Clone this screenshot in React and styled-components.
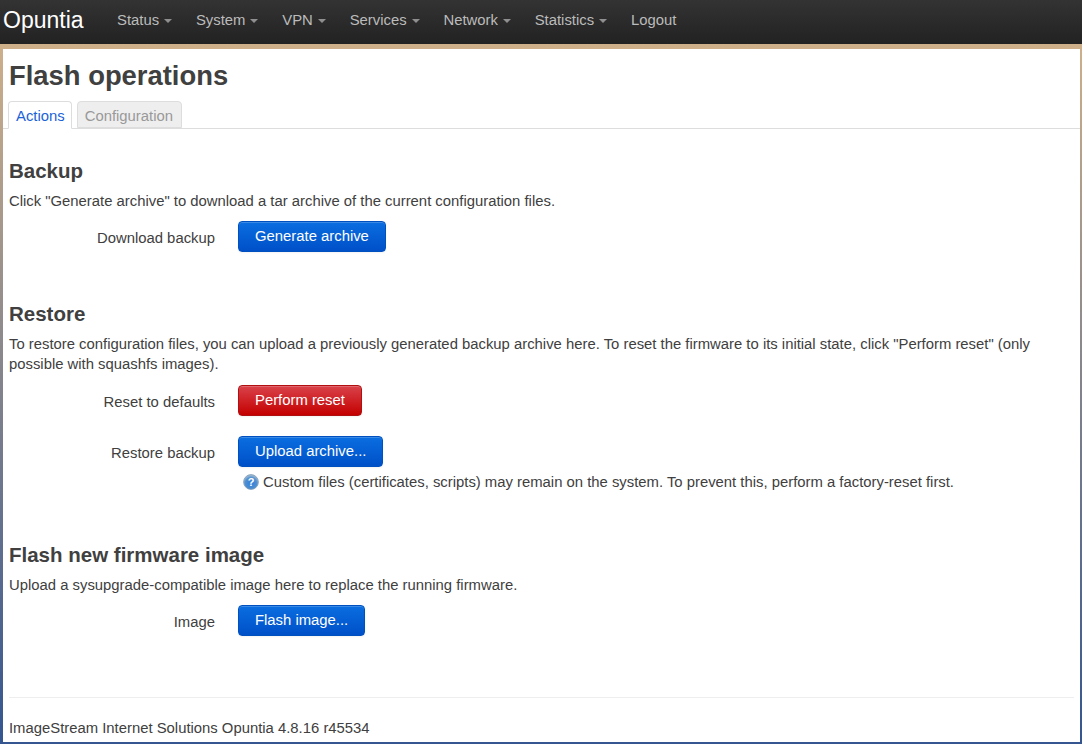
import React from "react";
import styled, { createGlobalStyle } from "styled-components";

const GlobalStyle = createGlobalStyle`
  html, body {
    margin: 0;
    padding: 0;
    height: 744px;
    overflow: hidden;
  }
  body {
    font-family: "Liberation Sans", Arial, sans-serif;
    font-size: 14.85px;
    line-height: 20px;
    color: #404040;
  }
`;

const menus = ["Status", "System", "VPN", "Services", "Network", "Statistics"];

const HelpIcon = () => (
  <svg width="16" height="16" viewBox="0 0 16 16">
    <defs>
      <radialGradient id="helpFill" cx="0.5" cy="0.6" r="0.55">
        <stop offset="0" stopColor="#2f7fdc" />
        <stop offset="0.7" stopColor="#4f8fd0" />
        <stop offset="1" stopColor="#9db8d2" />
      </radialGradient>
    </defs>
    <circle cx="8" cy="8" r="7.4" fill="url(#helpFill)" stroke="#7d9ab8" strokeWidth="0.8" />
    <text
      x="8"
      y="12"
      textAnchor="middle"
      fontSize="11"
      fontWeight="bold"
      fontFamily="Liberation Sans, sans-serif"
      fill="#fff"
    >
      ?
    </text>
  </svg>
);

const App = () => {
  return (
    <Page>
      <GlobalStyle />
      <Navbar>
        <Brand>Opuntia</Brand>
        <Menu>
          {menus.map((name) => (
            <MenuItem key={name}>
              {name}
              <Caret />
            </MenuItem>
          ))}
          <MenuItem>Logout</MenuItem>
        </Menu>
      </Navbar>
      <Main>
        <Title>Flash operations</Title>
        <Tabs>
          <Tab $active>Actions</Tab>
          <Tab>Configuration</Tab>
        </Tabs>
        <Section>
          <SectionTitle>Backup</SectionTitle>
          <Description>
            Click "Generate archive" to download a tar archive of the current
            configuration files.
          </Description>
          <FieldRow>
            <FieldLabel>Download backup</FieldLabel>
            <Button>Generate archive</Button>
          </FieldRow>
        </Section>
        <Section $top={48}>
          <SectionTitle>Restore</SectionTitle>
          <Description>
            To restore configuration files, you can upload a previously
            generated backup archive here. To reset the firmware to its initial
            state, click "Perform reset" (only possible with squashfs images).
          </Description>
          <FieldRow $top={11}>
            <FieldLabel>Reset to defaults</FieldLabel>
            <Button $danger>Perform reset</Button>
          </FieldRow>
          <FieldRow $top={20}>
            <FieldLabel>Restore backup</FieldLabel>
            <Button>Upload archive...</Button>
          </FieldRow>
          <Hint>
            <HelpIcon />
            Custom files (certificates, scripts) may remain on the system. To
            prevent this, perform a factory-reset first.
          </Hint>
        </Section>
        <Section $top={49}>
          <SectionTitle>Flash new firmware image</SectionTitle>
          <Description>
            Upload a sysupgrade-compatible image here to replace the running
            firmware.
          </Description>
          <FieldRow>
            <FieldLabel>Image</FieldLabel>
            <Button>Flash image...</Button>
          </FieldRow>
        </Section>
        <Footer>ImageStream Internet Solutions Opuntia 4.8.16 r45534</Footer>
      </Main>
    </Page>
  );
};

const Page = styled.div`
  height: 744px;
  display: flex;
  flex-direction: column;
  box-sizing: border-box;
  padding-bottom: 2px;
  background: linear-gradient(to bottom, #cfb08a 5%, #34558f 100%);
`;

const Navbar = styled.div`
  height: 44px;
  box-sizing: border-box;
  padding-bottom: 5px;
  flex: none;
  display: flex;
  align-items: center;
  background: linear-gradient(to bottom, #333333, #222222);
`;

const Brand = styled.div`
  font-size: 23px;
  color: #ffffff;
  padding-left: 3px;
  width: 114px;
`;

const Menu = styled.div`
  display: flex;
  gap: 23.85px;
`;

const MenuItem = styled.div`
  color: #bbbbbb;
  display: flex;
  align-items: center;
`;

const Caret = styled.span`
  width: 0;
  height: 0;
  margin-left: 5px;
  margin-top: 3px;
  border-left: 4px solid transparent;
  border-right: 4px solid transparent;
  border-top: 4px solid #8f8f8f;
`;

const Main = styled.div`
  flex: 1;
  margin: 5px 2px 0 3px;
  background: #ffffff;
  display: flex;
  flex-direction: column;
  min-height: 0;
`;

const Title = styled.h1`
  margin: 0;
  padding: 10px 0 0 6px;
  font-size: 27.4px;
  line-height: 34px;
  font-weight: bold;
`;

const Tabs = styled.div`
  display: flex;
  gap: 5px;
  margin-top: 8px;
  padding-left: 5px;
  height: 27px;
  border-bottom: 1px solid #dddddd;
`;

const Tab = styled.div`
  box-sizing: border-box;
  height: ${(p) => (p.$active ? "28px" : "27px")};
  padding: 4px ${(p) => (p.$active ? "6px" : "8px")} 0 7px;
  border: 1px solid #dddddd;
  border-bottom-color: ${(p) => (p.$active ? "#ffffff" : "#dddddd")};
  border-radius: 4px 4px 0 0;
  background: ${(p) => (p.$active ? "#ffffff" : "#eeeeee")};
  color: ${(p) => (p.$active ? "#1a62d8" : "#999999")};
`;

const Section = styled.div`
  margin-top: ${(p) => p.$top ?? 28}px;
  padding-left: 6px;
`;

const SectionTitle = styled.h2`
  margin: 0;
  font-size: 20.5px;
  line-height: 28px;
  font-weight: bold;
`;

const Description = styled.p`
  margin: 0;
  padding-top: 6px;
  padding-right: 8px;
  line-height: 20px;
`;

const FieldRow = styled.div`
  display: flex;
  align-items: center;
  margin-top: ${(p) => p.$top ?? 10}px;
`;

const FieldLabel = styled.div`
  width: 206px;
  text-align: right;
  margin-right: 23px;
  padding-top: 2px;
`;

const Button = styled.button`
  height: 31px;
  padding: 0 16px 2px;
  font-family: inherit;
  font-size: inherit;
  color: #ffffff;
  border: 1px solid ${(p) => (p.$danger ? "#b01010" : "#0050c0")};
  border-radius: 4px;
  background: ${(p) =>
    p.$danger
      ? "linear-gradient(to bottom, #d9424a, #c40000)"
      : "linear-gradient(to bottom, #0a6ee0, #0050c8)"};
  box-shadow: inset 0 1px 0 rgba(255, 255, 255, 0.2), 0 1px 2px rgba(0, 0, 0, 0.05);
`;

const Hint = styled.div`
  display: flex;
  align-items: center;
  gap: 4px;
  margin: 5px 0 0 234px;
`;

const Footer = styled.div`
  margin: auto 6px 0 6px;
  border-top: 1px solid #eeeeee;
  padding: 20px 0 4px;
`;

export default App;
